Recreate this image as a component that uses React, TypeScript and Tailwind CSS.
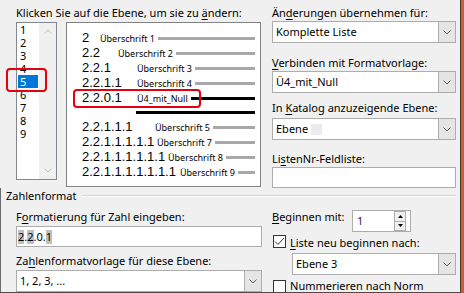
import React from 'react';

type Row = { num: string; w: string; text: string; dark?: boolean };

const upperRows: Row[] = [
  { num: '2', w: 'w-[18px]', text: 'Überschrift 1' },
  { num: '2.2', w: 'w-[36px]', text: 'Überschrift 2' },
  { num: '2.2.1', w: 'w-[55px]', text: 'Überschrift 3' },
  { num: '2.2.1.1', w: 'w-[55px]', text: 'Überschrift 4' },
  { num: '2.2.0.1', w: 'w-[55px]', text: 'Ü4_mit_Null', dark: true },
];

const lowerRows: Row[] = [
  { num: '2.2.1.1.1', w: 'w-[73px]', text: 'Überschrift 5' },
  { num: '2.2.1.1.1.1.1', w: 'w-[75px]', text: 'Überschrift 7' },
  { num: '2.2.1.1.1.1.1.1', w: 'w-[86px]', text: 'Überschrift 8' },
  { num: '2.2.1.1.1.1.1.1.1', w: 'w-[98px]', text: 'Überschrift 9' },
];

const levels = ['1', '2', '3', '4', '5', '6', '7', '8', '9'];

const Key = ({ children }: { children: React.ReactNode }) => (
  <span className="underline underline-offset-[2px] decoration-1">{children}</span>
);

const Label = ({ children, className = '' }: { children: React.ReactNode; className?: string }) => (
  <div className={`h-[16px] leading-[16px] whitespace-nowrap ${className}`}>{children}</div>
);

const ChevronDown = ({ color = '#5f5f5f' }: { color?: string }) => (
  <svg width="8" height="5" viewBox="0 0 8 5" fill="none">
    <path d="M0.5 0.5L4 4L7.5 0.5" stroke={color} strokeWidth="1" />
  </svg>
);

const ChevronUp = ({ color = '#c2c2c2' }: { color?: string }) => (
  <svg width="8" height="5" viewBox="0 0 8 5" fill="none">
    <path d="M0.5 4.5L4 1L7.5 4.5" stroke={color} strokeWidth="1" />
  </svg>
);

const Combo = ({ children, className = '' }: { children: React.ReactNode; className?: string }) => (
  <div className={`flex h-[22px] bg-white border border-[#adadad] ${className}`}>
    <div className="flex-1 flex items-center pl-[3px] whitespace-nowrap overflow-hidden">{children}</div>
    <div className="w-[17px] bg-[#e5e5e5] border-l border-[#adadad] flex items-center justify-center">
      <ChevronDown />
    </div>
  </div>
);

const CheckBox = ({ checked }: { checked?: boolean }) => (
  <div className="w-[13px] h-[13px] shrink-0 bg-white border border-[#333333] flex items-center justify-center">
    {checked && (
      <svg width="11" height="11" viewBox="0 0 11 11" fill="none">
        <path d="M1 5.5L4 8.5L10 2" stroke="#333333" strokeWidth="1" />
      </svg>
    )}
  </div>
);

const PreviewRow = ({ num, w, text, dark }: Row) => (
  <div className="flex items-baseline h-[15px] leading-[15px]">
    <span className={`${w} shrink-0 text-[13px] font-['Liberation_Sans',Arial,sans-serif]`}>{num}</span>
    <span className="text-[9px] whitespace-nowrap">{text}</span>
    <div className={`flex-1 self-end mb-[5px] ml-[3px] h-[3px] ${dark ? 'bg-black' : 'bg-[#a8a8a8]'}`} />
  </div>
);

export default function App() {
  return (
    <div className="w-[464px] h-[293px] flex bg-[#f0f0f0] overflow-hidden text-[11px] text-black font-['Noto_Sans','Open_Sans',sans-serif]">
      <div className="relative w-[460px] h-full flex flex-col border-b border-[#4a4a4a] overflow-hidden">
        {/* upper part */}
        <div className="flex pl-[16px] pt-[5px]">
          <div className="w-[246px] flex flex-col">
            <Label>
              Klicken Sie auf die Ebene, um sie zu <Key>ä</Key>ndern:
            </Label>
            <div className="flex mt-[1px]">
              <div className="w-[41px] h-[158px] bg-white border border-[#828790] flex">
                <div className="w-[22px] flex flex-col">
                  {levels.map((l) => (
                    <div
                      key={l}
                      className={`h-[13px] leading-[13px] mx-[1px] pl-[2px] ${l === '5' ? 'bg-[#0078d7] text-white' : ''}`}
                    >
                      {l}
                    </div>
                  ))}
                </div>
                <div className="flex-1 bg-[#f0f0f0] flex flex-col justify-between">
                  <div className="h-[17px] flex items-center justify-center">
                    <ChevronUp />
                  </div>
                  <div className="h-[17px] flex items-center justify-center">
                    <ChevronDown color="#c2c2c2" />
                  </div>
                </div>
              </div>
              <div className="relative ml-[9px] w-[195px] h-[165px] bg-white border border-[#828282] pl-[15px] pr-[5px] pt-[7px]">
                {upperRows.map((r) => (
                  <PreviewRow key={r.num} {...r} />
                ))}
                <div className="ml-[54px] mt-[6px] mb-[5px] h-[3px] bg-black" />
                {lowerRows.map((r) => (
                  <PreviewRow key={r.num} {...r} />
                ))}
                <div className="absolute left-[6px] top-[66px] w-[128px] h-[19px] border-2 border-[#e3000f] rounded-[4px]" />
              </div>
            </div>
          </div>

          <div className="ml-[10px] w-[184px] flex flex-col">
            <Label>
              Än<Key>d</Key>erungen übernehmen für:
            </Label>
            <Combo>Komplette Liste</Combo>
            <Label className="mt-[12px]">
              <Key>V</Key>erbinden mit Formatvorlage:
            </Label>
            <Combo>Ü4_mit_Null</Combo>
            <Label className="mt-[7px]">
              In <Key>K</Key>atalog anzuzeigende Ebene:
            </Label>
            <Combo className="mt-[2px]">
              Ebene
              <span className="ml-[3px] w-[11px] h-[11px] bg-[#ebebeb]" />
            </Combo>
            <Label className="mt-[11px]">
              Li<Key>s</Key>tenNr-Feldliste:
            </Label>
            <div className="h-[21px] bg-white border border-[#adadad]" />
          </div>
        </div>

        {/* Zahlenformat */}
        <div className="flex-1 flex flex-col border-l border-[#6a6a6a]">
          <div className="flex items-center h-[16px] pl-[5px]">
            <span className="whitespace-nowrap leading-[16px]">Zahlenformat</span>
            <div className="flex-1 ml-[5px] mr-[4px] border-t border-[#d5d5d5] border-b border-b-white" />
          </div>
          <div className="flex pl-[15px]">
            <div className="w-[246px] flex flex-col">
              <Label className="mt-[5px]">
                F<Key>o</Key>rmatierung für Zahl eingeben:
              </Label>
              <div className="mt-[1px] h-[21px] bg-white border border-[#adadad] flex items-center pl-px leading-[14px] whitespace-nowrap">
                <span className="bg-[#bfbfbf]">2</span>.<span className="bg-[#bfbfbf]">2</span>.0.
                <span className="bg-[#bfbfbf]">1</span>
              </div>
              <Label className="mt-[6px]">
                Za<Key>h</Key>lenformatvorlage für diese Ebene:
              </Label>
              <Combo className="mt-[1px]">1, 2, 3, ...</Combo>
            </div>

            <div className="ml-[10px] w-[184px] flex flex-col mt-[5px]">
              <div className="flex items-start">
                <Label className="w-[80px]">
                  <Key>B</Key>eginnen mit:
                </Label>
                <div className="mt-[1px] w-[59px] h-[22px] bg-white border border-[#adadad] flex">
                  <div className="w-[41px] pl-[4px] flex items-center text-[#2a1656]">1</div>
                  <div className="w-[12px] flex flex-col border border-[#adadad] bg-[#f0f0f0]">
                    <div className="flex-1 flex items-center justify-center border-b border-[#adadad]">
                      <svg width="5" height="3" viewBox="0 0 5 3">
                        <path d="M0 3L2.5 0L5 3Z" fill="#000" />
                      </svg>
                    </div>
                    <div className="flex-1 flex items-center justify-center">
                      <svg width="5" height="3" viewBox="0 0 5 3">
                        <path d="M0 0L2.5 3L5 0Z" fill="#000" />
                      </svg>
                    </div>
                  </div>
                </div>
              </div>
              <div className="flex items-start mt-[3px] ml-px">
                <CheckBox checked />
                <Label className="ml-[4px]">
                  <Key>L</Key>iste neu beginnen nach:
                </Label>
              </div>
              <Combo className="ml-[20px] mt-[2px]">Ebene 3</Combo>
              <div className="flex items-start mt-[3px] ml-px">
                <div className="mt-[2px]">
                  <CheckBox />
                </div>
                <Label className="ml-[4px]">
                  <Key>N</Key>ummerieren nach Norm
                </Label>
              </div>
            </div>
          </div>
        </div>

        {/* highlight around selected level */}
        <div className="absolute left-[6px] top-[68px] w-[41px] h-[24px] border-2 border-[#e3000f] rounded-[4px]" />
      </div>
      <div className="w-px h-full bg-[#3c3c3c]" />
      <div className="w-[3px] h-full bg-[#dc5a1e]" />
    </div>
  );
}
